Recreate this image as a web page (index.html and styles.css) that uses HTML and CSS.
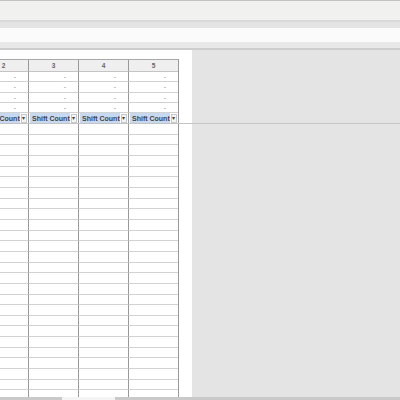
FILE: index.html
```html
<!DOCTYPE html>
<html>
<head>
<meta charset="utf-8">
<link rel="stylesheet" href="styles.css">
</head>
<body>
<div class="app">
  <div class="titlebar"></div>
  <div class="toolband"></div>
  <div class="formula"></div>
  <div class="toolband2"></div>
  <div class="pane top">
    <div class="sheet">
      <div class="grid head">
        <div class="cell hd">2</div><div class="cell hd">3</div><div class="cell hd">4</div><div class="cell hd">5</div>
        <div class="cell num">-</div><div class="cell num">-</div><div class="cell num">-</div><div class="cell num">-</div>
        <div class="cell num">-</div><div class="cell num">-</div><div class="cell num">-</div><div class="cell num">-</div>
        <div class="cell num">-</div><div class="cell num">-</div><div class="cell num">-</div><div class="cell num">-</div>
        <div class="cell num">-</div><div class="cell num">-</div><div class="cell num">-</div><div class="cell num">-</div>
        <div class="cell flt"><span class="lbl">Shift Count</span><span class="dd">▾</span></div>
        <div class="cell flt"><span class="lbl">Shift Count</span><span class="dd">▾</span></div>
        <div class="cell flt"><span class="lbl">Shift Count</span><span class="dd">▾</span></div>
        <div class="cell flt"><span class="lbl">Shift Count</span><span class="dd">▾</span></div>
      </div>
    </div>
    <div class="gray"></div>
  </div>
  <div class="pane bottom">
    <div class="sheet">
      <div class="grid body" id="body"></div>
    </div>
    <div class="gray"></div>
  </div>
  <div class="scrollbar"><div class="sb-a"></div><div class="sb-b"></div><div class="sb-c"></div></div>
</div>
<script>
  var b = document.getElementById('body');
  for (var i = 0; i < 26 * 4; i++) { var d = document.createElement('div'); d.className = 'cell'; b.appendChild(d); }
</script>
</body>
</html>
```
FILE: styles.css
```css
html, body { margin: 0; padding: 0; }
body { width: 400px; height: 400px; overflow: hidden; background: #e4e4e4; font-family: "Liberation Sans", Arial, sans-serif; }
.app { display: flex; flex-direction: column; height: 400px; }
.titlebar { height: 19px; border-top: 1px solid #c4c4c4; background: #f1f1f0; flex: none; }
.toolband { height: 6px; border-top: 2px solid #d9d9d9; background: #e4e4e4; flex: none; }
.formula { height: 14px; background: #fbfbfb; flex: none; }
.toolband2 { height: 6px; background: #e8e8e8; border-bottom: 2px solid #cdcdcd; flex: none; }
.pane { display: flex; flex: none; }
.pane.top { border-bottom: 1px solid #c4c4c4; }
.pane.bottom { flex: 1; min-height: 0; overflow: hidden; }
.sheet { width: 192px; background: #fff; overflow: hidden; flex: none; }
.pane.top .sheet { padding-top: 9px; }
.gray { flex: 1; background: #e4e4e4; }
.grid { display: grid; grid-template-columns: repeat(4, 50px); margin-left: -22px; width: 200px; border-right: 1px solid #999; }
.head { border-top: 1px solid #a8a8a8; grid-template-rows: 12px repeat(4, 10.25px) 10px; }
.body { grid-auto-rows: 10.67px; }
.cell { border-left: 1px solid #999; border-bottom: 1px solid #d2d2d2; box-sizing: border-box; font-size: 6.5px; color: #555; display: flex; align-items: center; overflow: hidden; }
.hd { background: #efefef; justify-content: center; font-weight: bold; color: #666; border-bottom-color: #c4c4c4; }
.num { justify-content: flex-end; padding-right: 12px; color: #888; }
.flt { border-bottom: none; padding: 0 1px 0 1px; }
.lbl { flex: 1; background: #c7d9f0; height: 100%; display: flex; align-items: center; padding-left: 2px; font-weight: bold; font-size: 7px; color: #444; white-space: nowrap; }
.dd { width: 9px; height: 9px; box-sizing: border-box; border: 1px solid #c8c8c8; background: #f4f4f4; font-size: 6px; line-height: 7px; text-align: center; color: #444; margin-left: 1px; }
.scrollbar { height: 3px; display: flex; flex: none; }
.sb-a { width: 62px; background: #c9c9c9; }
.sb-b { width: 53px; background: #f4f4f4; }
.sb-c { flex: 1; background: #c9c9c9; }
```
